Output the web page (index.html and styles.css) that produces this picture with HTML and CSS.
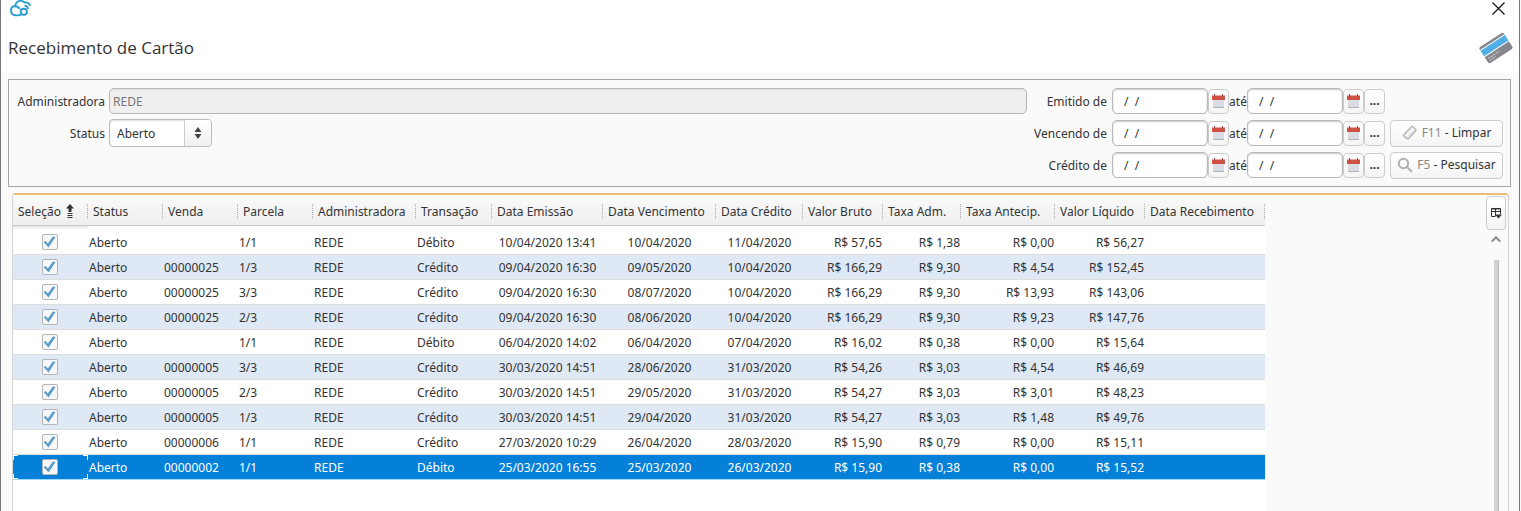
FILE: index.html
```html
<!DOCTYPE html>
<html lang="pt-BR">
<head>
<meta charset="utf-8">
<title>Recebimento de Cartão</title>
<link rel="stylesheet" href="styles.css">
</head>
<body>
<svg class="defs" aria-hidden="true">
  <symbol id="calendar" viewBox="0 0 13 15">
    <path d="M1 5h11v9H1z" fill="#d9dde3"/>
    <path d="M1 13.500h11" stroke="#aeb2b8"/>
    <path d="M0 1.500h13v4.500H0z" fill="#cf5147"/>
    <path d="M2.500 0v3M10.500 0v3" stroke="#8d4a45"/>
  </symbol>
</svg>
<div class="window">
  <header class="titlebar">
    <div class="top">
      <svg class="logo" viewBox="0 0 22 17" fill="none" stroke="#2b9cd0" stroke-width="1.900" aria-hidden="true">
        <path d="M12 14.700C10.500 15.500 8.500 15.500 6.500 15.200C3.500 15 2 12.800 2 10.500C2 8 3.700 6.300 6 6.300C8.200 6.300 9.800 7.300 10.500 9"/>
        <path d="M6.300 6.300C6.300 3 8.500 .9 11.500 .9C13.200 .9 14.500 1.500 15.500 2.500C18.500 2 20.800 3.300 21 6"/>
        <circle cx="14.800" cy="11.800" r="3.100"/>
        <path d="M15.500 5.700C17.500 5.500 19 7 18.800 9"/>
      </svg>
      <button class="close" type="button" aria-label="Fechar">
        <svg viewBox="0 0 13 13" stroke="#111" stroke-width="1.200"><path d="M.5.5l12 12M12.500.5l-12 12"/></svg>
      </button>
    </div>
    <div class="heading">
      <h1>Recebimento de Cartão</h1>
      <svg class="card" viewBox="0 0 34 32" aria-hidden="true">
        <g transform="rotate(-33 17 16)">
          <rect x="2.500" y="6.500" width="29" height="19" rx="2" fill="#85878c"/>
          <path d="M2.500 9h29v8.500h-29z" fill="#fff"/>
          <path d="M2.500 10h29v6.500h-29z" fill="#51afe8"/>
          <path d="M5 20.500h13M5 23h7" stroke="#e4d9dc" stroke-dasharray="2 1"/>
        </g>
      </svg>
    </div>
  </header>

  <main>
    <form class="filters">
      <div class="general">
        <label for="adm">Administradora</label>
        <input id="adm" class="field" type="text" value="REDE" disabled>
        <label for="status">Status</label>
        <div class="combo">
          <select id="status"><option>Aberto</option></select>
          <span class="spin" aria-hidden="true"><svg viewBox="0 0 8 12" fill="#444"><path d="M4 0l3.500 5h-7zM4 12L.5 7h7z"/></svg></span>
        </div>
      </div>
      <div class="dates">
        <label for="e1">Emitido de</label>
        <div class="range">
          <input id="e1" class="field date" type="text" value=" /  /">
          <button class="mini" type="button" aria-label="Calendário"><svg class="cal"><use href="#calendar"/></svg></button>
          <label for="e2">até</label>
          <input id="e2" class="field date" type="text" value=" /  /">
          <button class="mini" type="button" aria-label="Calendário"><svg class="cal"><use href="#calendar"/></svg></button>
          <button class="mini" type="button">...</button>
        </div>
        <span></span>
        <label for="v1">Vencendo de</label>
        <div class="range">
          <input id="v1" class="field date" type="text" value=" /  /">
          <button class="mini" type="button" aria-label="Calendário"><svg class="cal"><use href="#calendar"/></svg></button>
          <label for="v2">até</label>
          <input id="v2" class="field date" type="text" value=" /  /">
          <button class="mini" type="button" aria-label="Calendário"><svg class="cal"><use href="#calendar"/></svg></button>
          <button class="mini" type="button">...</button>
        </div>
        <button class="action" type="button">
          <svg viewBox="0 0 16 16"><path d="M1.500 10L9.500 1.500Q10 1 10.700 1.500L14 4.500Q14.500 5 14 5.700L6.500 13.800Q6 14.300 5.300 14L1.500 11.200Q1 10.500 1.500 10z" fill="#dedede" stroke="#999"/><path d="M4 11L11.500 3.500" stroke="#f8f8f8" stroke-width="2"/></svg>
          <span><i>F11</i> - Limpar</span>
        </button>
        <label for="c1">Crédito de</label>
        <div class="range">
          <input id="c1" class="field date" type="text" value=" /  /">
          <button class="mini" type="button" aria-label="Calendário"><svg class="cal"><use href="#calendar"/></svg></button>
          <label for="c2">até</label>
          <input id="c2" class="field date" type="text" value=" /  /">
          <button class="mini" type="button" aria-label="Calendário"><svg class="cal"><use href="#calendar"/></svg></button>
          <button class="mini" type="button">...</button>
        </div>
        <button class="action" type="button">
          <svg viewBox="0 0 16 16" fill="none" stroke="#b0b0b0" stroke-width="2" stroke-linecap="round"><circle cx="6.500" cy="6.500" r="4.700"/><path d="M10 10l4.300 4.300"/></svg>
          <span><i>F5</i> - Pesquisar</span>
        </button>
      </div>
    </form>

    <section class="grid">
      <div class="sheet">
        <table>
          <colgroup><col class="w75"><col class="w75"><col class="w75"><col class="w75"><col class="w103"><col class="w76"><col class="w111"><col class="w113"><col class="w87"><col class="w80"><col class="w78"><col class="w94"><col class="w90"><col class="w120"></colgroup>
          <thead>
            <tr><th>Seleção <svg class="sort" viewBox="0 0 8 14" aria-hidden="true"><path d="M4 0l4 4.500H5.500V8h-3V4.500H0z" fill="#333"/><path d="M1.500 9.500h5M1.500 11.500h5M1.500 13.500h5" stroke="#333"/></svg></th><th>Status</th><th>Venda</th><th>Parcela</th><th>Administradora</th><th>Transação</th><th>Data Emissão</th><th>Data Vencimento</th><th>Data Crédito</th><th>Valor Bruto</th><th>Taxa Adm.</th><th>Taxa Antecip.</th><th>Valor Líquido</th><th>Data Recebimento</th></tr>
          </thead>
          <tbody>
            <tr><td><input type="checkbox" aria-label="Selecionar" checked></td><td>Aberto</td><td></td><td>1/1</td><td>REDE</td><td>Débito</td><td>10/04/2020 13:41</td><td>10/04/2020</td><td>11/04/2020</td><td>R$ 57,65</td><td>R$ 1,38</td><td>R$ 0,00</td><td>R$ 56,27</td><td></td></tr>
            <tr><td><input type="checkbox" aria-label="Selecionar" checked></td><td>Aberto</td><td>00000025</td><td>1/3</td><td>REDE</td><td>Crédito</td><td>09/04/2020 16:30</td><td>09/05/2020</td><td>10/04/2020</td><td>R$ 166,29</td><td>R$ 9,30</td><td>R$ 4,54</td><td>R$ 152,45</td><td></td></tr>
            <tr><td><input type="checkbox" aria-label="Selecionar" checked></td><td>Aberto</td><td>00000025</td><td>3/3</td><td>REDE</td><td>Crédito</td><td>09/04/2020 16:30</td><td>08/07/2020</td><td>10/04/2020</td><td>R$ 166,29</td><td>R$ 9,30</td><td>R$ 13,93</td><td>R$ 143,06</td><td></td></tr>
            <tr><td><input type="checkbox" aria-label="Selecionar" checked></td><td>Aberto</td><td>00000025</td><td>2/3</td><td>REDE</td><td>Crédito</td><td>09/04/2020 16:30</td><td>08/06/2020</td><td>10/04/2020</td><td>R$ 166,29</td><td>R$ 9,30</td><td>R$ 9,23</td><td>R$ 147,76</td><td></td></tr>
            <tr><td><input type="checkbox" aria-label="Selecionar" checked></td><td>Aberto</td><td></td><td>1/1</td><td>REDE</td><td>Débito</td><td>06/04/2020 14:02</td><td>06/04/2020</td><td>07/04/2020</td><td>R$ 16,02</td><td>R$ 0,38</td><td>R$ 0,00</td><td>R$ 15,64</td><td></td></tr>
            <tr><td><input type="checkbox" aria-label="Selecionar" checked></td><td>Aberto</td><td>00000005</td><td>3/3</td><td>REDE</td><td>Crédito</td><td>30/03/2020 14:51</td><td>28/06/2020</td><td>31/03/2020</td><td>R$ 54,26</td><td>R$ 3,03</td><td>R$ 4,54</td><td>R$ 46,69</td><td></td></tr>
            <tr><td><input type="checkbox" aria-label="Selecionar" checked></td><td>Aberto</td><td>00000005</td><td>2/3</td><td>REDE</td><td>Crédito</td><td>30/03/2020 14:51</td><td>29/05/2020</td><td>31/03/2020</td><td>R$ 54,27</td><td>R$ 3,03</td><td>R$ 3,01</td><td>R$ 48,23</td><td></td></tr>
            <tr><td><input type="checkbox" aria-label="Selecionar" checked></td><td>Aberto</td><td>00000005</td><td>1/3</td><td>REDE</td><td>Crédito</td><td>30/03/2020 14:51</td><td>29/04/2020</td><td>31/03/2020</td><td>R$ 54,27</td><td>R$ 3,03</td><td>R$ 1,48</td><td>R$ 49,76</td><td></td></tr>
            <tr><td><input type="checkbox" aria-label="Selecionar" checked></td><td>Aberto</td><td>00000006</td><td>1/1</td><td>REDE</td><td>Crédito</td><td>27/03/2020 10:29</td><td>26/04/2020</td><td>28/03/2020</td><td>R$ 15,90</td><td>R$ 0,79</td><td>R$ 0,00</td><td>R$ 15,11</td><td></td></tr>
            <tr class="selected"><td><input type="checkbox" aria-label="Selecionar" checked></td><td>Aberto</td><td>00000002</td><td>1/1</td><td>REDE</td><td>Débito</td><td>25/03/2020 16:55</td><td>25/03/2020</td><td>26/03/2020</td><td>R$ 15,90</td><td>R$ 0,38</td><td>R$ 0,00</td><td>R$ 15,52</td><td></td></tr>
          </tbody>
        </table>
      </div>
      <div class="rail">
        <button class="columns" type="button" aria-label="Colunas"><svg viewBox="0 0 11 11" fill="none" stroke="#333"><path d="M4 8.500H.5v-8h9V6M.5 3.500h9M4.500.5v8M.5 1h9"/><path d="M4 6.500h7L7.500 10.500z" fill="#333" stroke="none"/></svg></button>
        <svg class="up" viewBox="0 0 10 6" fill="none" stroke="#888" stroke-width="2" aria-hidden="true"><path d="M.8 5.500L5 1.300l4.200 4.200"/></svg>
        <div class="thumb"></div>
      </div>
    </section>
  </main>
</div>
</body>
</html>
```
FILE: styles.css
```css
* { box-sizing: border-box; }
body {
  margin: 0;
  height: 100vh;
  overflow: hidden;
  background: #fafafa;
  color: #333;
  font: 12px/18px "Noto Sans", "DejaVu Sans", sans-serif;
}
button, input, select { font: inherit; color: inherit; margin: 0; padding: 0; }
svg { display: block; }
.defs { display: none; }

.window {
  height: 100%;
  margin-right: 1px;
  display: flex;
  flex-direction: column;
  border: solid #77757a;
  border-width: 0 1px;
}
.titlebar { background: #fff; height: 72px; flex: none; }
.top, .heading { display: flex; justify-content: space-between; }
.top { padding: 0 14px 0 8px; height: 32px; }
.logo { width: 22px; height: 17px; }
.close { border: 0; background: none; width: 13px; height: 16px; }
.close svg { width: 13px; height: 13px; }
.heading { padding: 0 6px 0 7px; }
h1 { margin: 4px 0 0; font: 400 17px/24px "Open Sans", "Noto Sans", sans-serif; }
.card { width: 34px; height: 32px; }

main {
  flex: 1;
  min-height: 0;
  display: flex;
  flex-direction: column;
  gap: 6px;
  padding: 7px 8px 0 7px;
}
.filters {
  flex: none;
  display: flex;
  align-items: flex-start;
  gap: 4px;
  padding: 7px 7px 7px 8px;
  border: 1px solid #a6a6a6;
}
.general, .dates { display: grid; grid-auto-rows: 28px; row-gap: 4px; align-items: center; }
.general { flex: 1; grid-template-columns: 88px 1fr; column-gap: 4px; }
.general > label, .dates > label { text-align: right; white-space: nowrap; }
label { padding-top: 1px; }
.dates { grid-template-columns: 76px auto 113px; column-gap: 5px; }
.field {
  height: 26px;
  min-width: 0;
  border: 1px solid #b8b8b8;
  border-radius: 5px;
  background: #fff;
  box-shadow: inset 0 1px 2px #ccc;
}
.field:disabled { background: #efefef; color: #777; padding-left: 3px; box-shadow: inset 0 1px 1px #ddd; }
.date { width: 96px; padding-left: 8px; white-space: pre; }
.combo {
  display: flex;
  width: 103px;
  height: 28px;
  border: 1px solid #bbb;
  border-radius: 4px;
  background: #fff;
  box-shadow: inset 0 1px 2px #ddd;
}
.combo select { flex: 1; appearance: none; border: 0; background: none; padding: 1px 0 0 7px; }
.spin {
  width: 27px;
  display: grid;
  place-items: center;
  border-left: 1px solid #ccc;
  background: linear-gradient(#fff, #f0f0f0);
  border-radius: 0 3px 3px 0;
}
.spin svg { width: 8px; height: 12px; }
.range { display: flex; align-items: center; }
.range label { width: 18px; text-align: center; }
.mini, .action, .columns {
  border: 1px solid #ccc;
  border-radius: 4px;
  background: linear-gradient(#fff, #f4f4f4);
}
.mini { width: 21px; height: 25px; display: grid; place-items: center; font-weight: bold; }
.cal { width: 13px; height: 15px; }
.action { height: 27px; display: flex; align-items: center; justify-content: center; gap: 4px; white-space: nowrap; }
.action svg { width: 16px; height: 16px; }
.action i { font-style: normal; color: #888; }

.grid {
  flex: 1;
  min-height: 0;
  margin: 0 2px 0 4px;
  display: flex;
  justify-content: space-between;
  border: 1px solid #d4d4d4;
  border-top: 2px solid #e9bc78;
  border-bottom: 0;
  border-radius: 4px 4px 0 0;
}
.sheet { background: #fff; }
table { width: 1252px; table-layout: fixed; border-collapse: separate; border-spacing: 0; white-space: nowrap; }
.w75 { width: 75px; }
.w76 { width: 76px; }
.w78 { width: 78px; }
.w80 { width: 80px; }
.w87 { width: 87px; }
.w90 { width: 90px; }
.w94 { width: 94px; }
.w103 { width: 103px; }
.w111 { width: 111px; }
.w113 { width: 113px; }
.w120 { width: 120px; }
th {
  height: 31px;
  padding: 4px 0 0 5px;
  font-weight: normal;
  text-align: left;
  border-bottom: 1px solid #c8c8c8;
  background:
    repeating-linear-gradient(#aaa 0 1px, transparent 1px 2px) right 9px / 1px 15px no-repeat,
    linear-gradient(#fafafa, #eee);
}
.sort { display: inline-block; width: 8px; height: 14px; margin-left: 2px; vertical-align: -2px; }
tbody::before { content: ""; display: table-row; height: 4px; background: linear-gradient(#e6e6e6, #fff); }
td { height: 25px; padding: 2px 0 0 1px; border-bottom: 1px solid #ddd; }
tbody tr:nth-child(even) { background: #dfe9f5; }
td:first-child, td:nth-child(7), td:nth-child(8), td:nth-child(9) { text-align: center; padding-left: 0; }
td:first-child { padding: 0 2px 0 0; }
td:nth-child(n+10) { text-align: right; padding-right: 1px; }
tbody tr.selected:nth-child(n) { background: #0480d8; color: #fff; }
.selected td { border-color: #9fdcf8; }
.selected td:first-child {
  --tick: linear-gradient(#fff, #fff);
  background:
    var(--tick) 0 0 / 5px 1px, var(--tick) 0 0 / 1px 5px,
    var(--tick) 100% 0 / 5px 1px, var(--tick) 100% 0 / 1px 5px,
    var(--tick) 0 100% / 5px 1px, var(--tick) 0 100% / 1px 5px,
    var(--tick) 100% 100% / 5px 1px, var(--tick) 100% 100% / 1px 5px;
  background-repeat: no-repeat;
}
td input {
  appearance: none;
  display: block;
  width: 16px;
  height: 16px;
  margin: 0 auto;
  border: 1px solid #b5b5b5;
  border-radius: 2px;
  background: #f5f7f9;
}
td input:checked::before {
  content: "";
  display: block;
  width: 12px;
  height: 12px;
  margin: 1px;
  background: #5d9dc8;
  clip-path: polygon(0 50%, 18% 42%, 36% 62%, 78% 4%, 100% 8%, 42% 96%);
}

.rail { width: 24px; display: flex; flex-direction: column; align-items: center; padding: 1px 2px 0; }
.columns { width: 20px; height: 34px; flex: none; display: grid; place-items: center; }
.columns svg { width: 11px; height: 11px; }
.up { width: 10px; height: 6px; flex: none; margin: 6px 0 18px; }
.thumb { width: 5px; flex: 1; background: #d2d2d2; border-right: 1px solid #bbb; }
```
